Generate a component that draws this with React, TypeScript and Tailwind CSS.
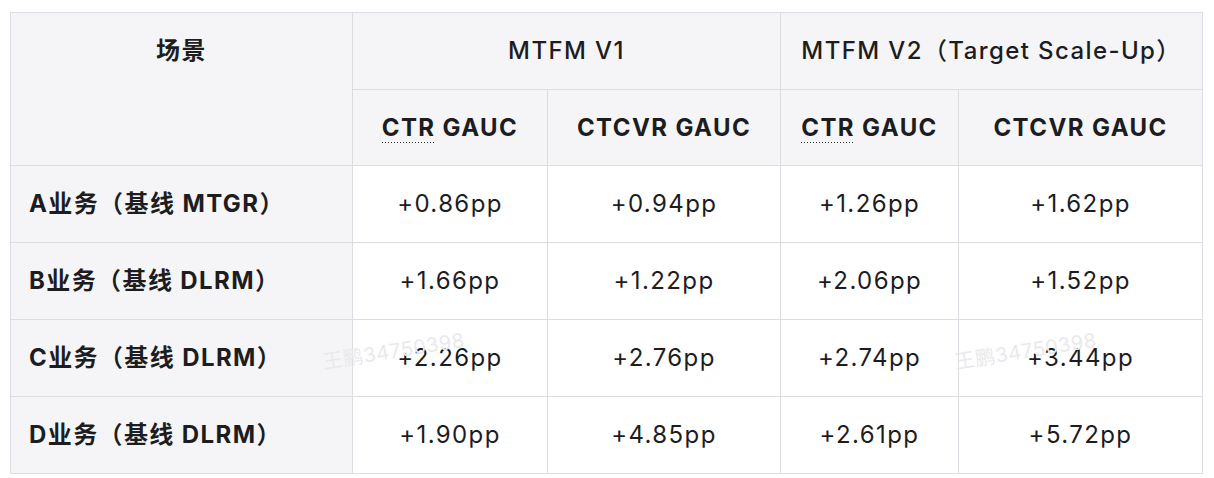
import React from "react"

const rows = [
  { label: "A业务（基线 MTGR）", v: ["+0.86pp", "+0.94pp", "+1.26pp", "+1.62pp"] },
  { label: "B业务（基线 DLRM）", v: ["+1.66pp", "+1.22pp", "+2.06pp", "+1.52pp"] },
  { label: "C业务（基线 DLRM）", v: ["+2.26pp", "+2.76pp", "+2.74pp", "+3.44pp"] },
  { label: "D业务（基线 DLRM）", v: ["+1.90pp", "+4.85pp", "+2.61pp", "+5.72pp"] },
]

const font = { fontFamily: '"Inter", "Noto Sans CJK SC", sans-serif' }

// dotted hint line under "CTR"
const dotted =
  "bg-[linear-gradient(to_right,#333_1px,transparent_1px)] bg-[length:3px_1px] bg-repeat-x bg-[position:0_100%] pb-[1px]"

function Watermark({ className }: { className: string }) {
  return (
    <div className={`pointer-events-none absolute -rotate-[9deg] text-[20px] tracking-[0.5px] text-[#e9e9ec] select-none ${className}`}>
      王鹏34750398
    </div>
  )
}

export default function App() {
  return (
    <div className="w-[1214px] h-[478px] bg-white pt-[12px] pl-[10px]" style={font}>
      <div className="relative w-[1192px]">
        <table className="border-collapse table-fixed w-[1192px] text-[#1d1d1f] text-[24px] tracking-[1.4px]">
          <colgroup>
            <col className="w-[342px]" />
            <col className="w-[195px]" />
            <col className="w-[233px]" />
            <col className="w-[178px]" />
            <col className="w-[244px]" />
          </colgroup>
          <thead>
            <tr className="h-[77px] bg-[#f5f5f7]">
              <th rowSpan={2} className="border border-[#dcdce2] align-top pt-[20px] font-bold">
                场景
              </th>
              <th colSpan={2} className="border border-[#dcdce2] font-medium">
                MTFM V1
              </th>
              <th colSpan={2} className="border border-[#dcdce2] font-medium">
                MTFM V2（Target Scale-Up）
              </th>
            </tr>
            <tr className="h-[76px] bg-[#f5f5f7] font-bold">
              <th className="border border-[#dcdce2]">
                <span className={dotted}>CTR</span> GAUC
              </th>
              <th className="border border-[#dcdce2]">CTCVR GAUC</th>
              <th className="border border-[#dcdce2]">
                <span className={dotted}>CTR</span> GAUC
              </th>
              <th className="border border-[#dcdce2]">CTCVR GAUC</th>
            </tr>
          </thead>
          <tbody>
            {rows.map((r) => (
              <tr key={r.label} className="h-[77px]">
                <td className="border border-[#dcdce2] bg-[#f5f5f7] pl-[18px] font-bold">{r.label}</td>
                {r.v.map((x, i) => (
                  <td key={i} className="border border-[#dcdce2] text-center">
                    {x}
                  </td>
                ))}
              </tr>
            ))}
          </tbody>
        </table>
        <Watermark className="left-[312px] top-[324px]" />
        <Watermark className="left-[944px] top-[324px]" />
      </div>
    </div>
  )
}
